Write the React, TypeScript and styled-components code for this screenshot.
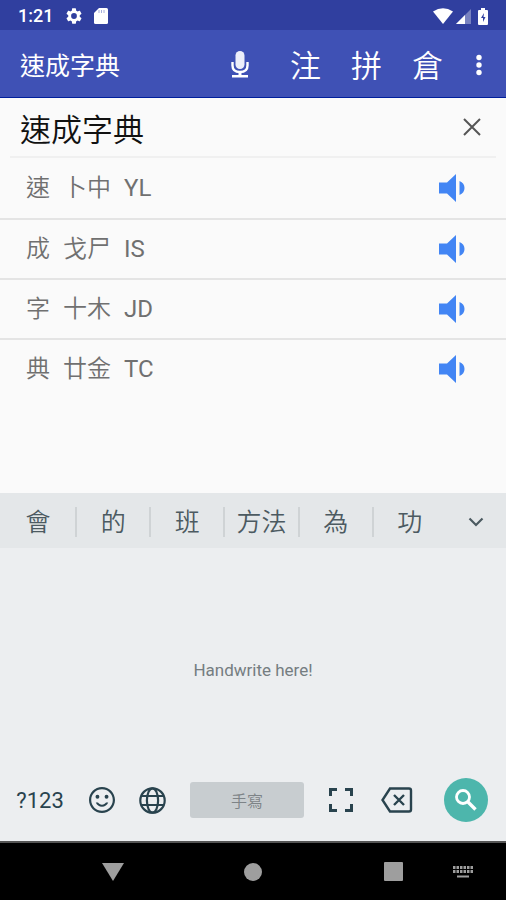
import React, { useState } from 'react';
import styled, { createGlobalStyle } from 'styled-components';

const GlobalStyle = createGlobalStyle`
  *, *::before, *::after { box-sizing: border-box; }
  body { margin: 0; background: #fafafa; }
  body, button, input { font-family: Roboto, "Noto Sans CJK TC", sans-serif; }
`;

const Screen = styled.div`
  display: flex;
  flex-direction: column;
  min-height: 100vh;
  background: #fafafa;
`;

const StatusBar = styled.div`
  display: flex;
  align-items: center;
  height: 30px;
  padding: 2px 14px 0 18px;
  background: #303f9f;
  color: #fff;
`;

const Clock = styled.time`
  width: 48px;
  font-size: 18px;
  font-weight: 500;
  line-height: 24px;
`;

const StatusIcons = styled.div<{ $gap: number; $end?: boolean }>`
  display: flex;
  align-items: center;
  gap: ${p => p.$gap}px;
  margin-left: ${p => (p.$end ? 'auto' : '0')};
`;

const Icon = styled.svg`
  display: block;
  flex: none;
  fill: currentColor;
`;

const AppBar = styled.header`
  display: flex;
  align-items: center;
  height: 68px;
  padding: 2px 6px 0 20px;
  background: #3f51b5;
  border-bottom: 1px solid #001f9c;
  color: #fff;
`;

const Title = styled.h1`
  flex: 1;
  margin: 0;
  padding-top: 4px;
  font-size: 25px;
  font-weight: 400;
  line-height: 36px;
  white-space: nowrap;
`;

const PlainButton = styled.button`
  display: flex;
  align-items: center;
  justify-content: center;
  padding: 0;
  border: 0;
  background: none;
  color: inherit;
  cursor: pointer;
`;

const BarAction = styled(PlainButton)<{ $width: number }>`
  width: ${p => p.$width}px;
  height: 60px;
`;

const BarGlyph = styled(BarAction)`
  padding-top: 4px;
  font-size: 31px;
  font-weight: 350;
  line-height: 40px;
`;

const SearchRow = styled.form`
  display: flex;
  align-items: center;
  height: 60px;
  margin: 0 10px;
  border-bottom: 2px solid #f0f0f0;
`;

const SearchInput = styled.input`
  flex: 1;
  min-width: 0;
  height: 48px;
  padding: 0 10px;
  border: 0;
  outline: 0;
  background: none;
  color: #111;
  font-size: 31px;
  font-weight: 350;
`;

const ClearButton = styled(PlainButton)`
  width: 48px;
  height: 48px;
  color: #555;
`;

const Results = styled.ul`
  flex: 1;
  margin: 0;
  padding: 0;
  list-style: none;
`;

const ResultRow = styled.li`
  display: flex;
  align-items: center;
  gap: 13px;
  height: 60px;
  padding: 0 36px 0 26px;
  color: #707070;
  font-size: 24px;
  line-height: 36px;

  & + & { border-top: 2px solid #e4e4e4; }
`;

const Glyphs = styled.span`
  font-weight: 350;
`;

const Letters = styled.span`
  flex: 1;
`;

const SpeakButton = styled(PlainButton)`
  width: 36px;
  height: 48px;
  color: #4285f4;
`;

const Keyboard = styled.section`
  background: #eceef0;
  color: #37474f;
`;

const Candidates = styled.div`
  display: grid;
  grid-template-columns: repeat(6, 74fr) 60fr;
  align-items: center;
  height: 55px;
  padding: 2px 0 0 1px;
  background: #e4e7e9;
`;

const Candidate = styled(PlainButton)`
  height: 30px;
  padding-top: 2px;
  font-size: 25px;
  font-weight: 350;
  line-height: 30px;
  color: #4c5a61;
  white-space: nowrap;

  & + & { border-left: 2px solid #cfd3d5; }
`;

const MoreButton = styled(PlainButton)`
  height: 48px;
`;

const WritingArea = styled.div`
  display: flex;
  align-items: center;
  justify-content: center;
  height: 211px;
  padding-top: 32px;
  color: #757d81;
  font-size: 17px;
  line-height: 24px;
`;

const KeyRow = styled.div`
  display: grid;
  grid-template-columns: 52fr 72fr 28fr 147fr 56fr 56fr 63px;
  align-items: center;
  height: 82px;
  padding: 0 18px 0 14px;
`;

const Key = styled(PlainButton)`
  height: 48px;
  font-size: 22px;
  color: #29434e;
`;

const SpaceKey = styled(PlainButton)`
  height: 36px;
  margin: 0 9px 0 24px;
  border-radius: 3px;
  background: #c8cdd0;
  color: #7d8387;
  font-size: 16px;
  font-weight: 350;
`;

const SearchKey = styled(PlainButton)`
  justify-self: end;
  width: 44px;
  height: 44px;
  border-radius: 50%;
  background: #4db6ac;
  color: #fff;
`;

const NavBar = styled.nav`
  display: grid;
  grid-template-columns: 43fr 140fr 140fr 30fr 80fr 60fr 13fr;
  align-items: center;
  height: 59px;
  border-top: 2px solid #555;
  background: #000;
  color: #9e9e9e;
`;

const NavButton = styled(PlainButton)<{ $column: number }>`
  grid-column: ${p => p.$column};
  height: 48px;
`;

const entries = [
  { char: '速', radicals: '卜中', code: 'YL' },
  { char: '成', radicals: '戈尸', code: 'IS' },
  { char: '字', radicals: '十木', code: 'JD' },
  { char: '典', radicals: '廿金', code: 'TC' },
];

const candidates = ['會', '的', '班', '方法', '為', '功'];

const gear =
  'M19.14 12.94c.04-.3.06-.61.06-.94 0-.32-.02-.64-.07-.94l2.03-1.58a.49.49 0 0 0 .12-.61l-1.92-3.32a.488.488 0 0 0-.59-.22l-2.39.96c-.5-.38-1.03-.7-1.62-.94l-.36-2.54a.484.484 0 0 0-.48-.41h-3.84c-.24 0-.43.17-.47.41l-.36 2.54c-.59.24-1.13.57-1.62.94l-2.39-.96c-.22-.08-.47 0-.59.22L2.74 8.87c-.12.21-.08.47.12.61l2.03 1.58c-.05.3-.09.63-.09.94s.02.64.07.94l-2.03 1.58a.49.49 0 0 0-.12.61l1.92 3.32c.12.22.37.29.59.22l2.39-.96c.5.38 1.03.7 1.62.94l.36 2.54c.05.24.24.41.48.41h3.84c.24 0 .44-.17.47-.41l.36-2.54c.59-.24 1.13-.56 1.62-.94l2.39.96c.22.08.47 0 .59-.22l1.92-3.32c.12-.22.07-.47-.12-.61l-2.01-1.58zM12 15.6A3.6 3.6 0 1 1 12 8.4a3.6 3.6 0 0 1 0 7.2z';

const smile =
  'M11.99 2C6.47 2 2 6.48 2 12s4.47 10 9.99 10C17.52 22 22 17.52 22 12S17.52 2 11.99 2zM12 20.3c-4.58 0-8.3-3.72-8.3-8.3s3.72-8.3 8.3-8.3 8.3 3.72 8.3 8.3-3.72 8.3-8.3 8.3zm3.5-9.3a1.5 1.5 0 1 0 0-3 1.5 1.5 0 0 0 0 3zm-7 0a1.5 1.5 0 1 0 0-3 1.5 1.5 0 0 0 0 3zm3.5 6.2c2.2 0 4-1.2 4.8-3.2h-1.7c-.6 1-1.8 1.6-3.1 1.6s-2.5-.6-3.1-1.6H7.2c.8 2 2.6 3.2 4.8 3.2z';

const keyCells = [0, 1, 2, 3, 4, 5].flatMap(col => [0, 1].map(row => ({ col, row })));

export default function App() {
  const [query, setQuery] = useState('速成字典');

  return (
    <>
      <GlobalStyle />
      <Screen>
        <StatusBar>
          <Clock>1:21</Clock>
          <StatusIcons $gap={12}>
            <Icon width="16" height="16" viewBox="2 2 20 20"><path d={gear} /></Icon>
            <Icon width="14" height="16" viewBox="0 0 14 16">
              <path d="M5 0h7.5Q14 0 14 1.5v13q0 1.500-1.500 1.500h-11Q0 16 0 14.500V5z" />
              <path d="M5 2v3M7.500 2v3M10 2v3" stroke="#a5addb" />
            </Icon>
          </StatusIcons>
          <StatusIcons $gap={3} $end>
            <Icon width="20" height="16" viewBox="0 0 20 16"><path d="M0 3.500Q10-3 20 3.500L10 16z" /></Icon>
            <Icon width="15" height="15" viewBox="0 0 15 15">
              <path d="M0 15 15 0v15z" opacity=".35" />
              <path d="M0 15 9 6v9z" />
            </Icon>
            <Icon width="18" height="17" viewBox="0 0 18 17">
              <path d="M7 2V0h4v2h2q1 0 1 1v13q0 1-1 1H5q-1 0-1-1V3q0-1 1-1z" />
              <path d="M10 5 7 10h2v4l2.500-5h-2z" fill="#303f9f" />
            </Icon>
          </StatusIcons>
        </StatusBar>

        <AppBar>
          <Title>速成字典</Title>
          <BarAction type="button" $width={70} aria-label="Voice input">
            <Icon width="18" height="30" viewBox="0 0 18 30">
              <path d="M1.500 12v3.500q0 6.500 7.500 6.500t7.500-6.500V12" fill="none" stroke="#fff" strokeWidth="2.400" />
              <rect x="4.500" y="1" width="9" height="18" rx="4.500" fill="#eceefa" />
              <path d="M7.500 22h3v3H17v2.500H1V25h6.500z" />
            </Icon>
          </BarAction>
          <BarGlyph type="button" $width={61}>注</BarGlyph>
          <BarGlyph type="button" $width={61}>拼</BarGlyph>
          <BarGlyph type="button" $width={61}>倉</BarGlyph>
          <BarAction type="button" $width={42} aria-label="More options">
            <Icon width="6" height="22" viewBox="0 0 6 22">
              <circle cx="3" cy="3.500" r="2.700" /><circle cx="3" cy="11" r="2.700" /><circle cx="3" cy="18.500" r="2.700" />
            </Icon>
          </BarAction>
        </AppBar>

        <SearchRow onSubmit={e => e.preventDefault()}>
          <SearchInput aria-label="Search" value={query} onChange={e => setQuery(e.target.value)} />
          <ClearButton type="button" aria-label="Clear" onClick={() => setQuery('')}>
            <Icon width="18" height="18" viewBox="0 0 18 18">
              <path d="m1 1 16 16M17 1 1 17" stroke="currentColor" strokeWidth="2" />
            </Icon>
          </ClearButton>
        </SearchRow>

        <Results>
          {entries.map(entry => (
            <ResultRow key={entry.char}>
              <Glyphs>{entry.char}</Glyphs>
              <Glyphs>{entry.radicals}</Glyphs>
              <Letters>{entry.code}</Letters>
              <SpeakButton type="button" aria-label={`Play ${entry.char}`}>
                <Icon width="26" height="28" viewBox="0 0 26 28">
                  <path d="M0 8.500h8L17 0v28L8 19.500H0zM20.500 7q5 2 5 7t-5 7z" />
                </Icon>
              </SpeakButton>
            </ResultRow>
          ))}
        </Results>

        <Keyboard>
          <Candidates>
            {candidates.map(word => <Candidate type="button" key={word}>{word}</Candidate>)}
            <MoreButton type="button" aria-label="More candidates">
              <Icon width="16" height="10" viewBox="0 0 16 10">
                <path d="m1.500 1.500 6.500 6.500 6.500-6.500" fill="none" stroke="#4c5a61" strokeWidth="2.200" />
              </Icon>
            </MoreButton>
          </Candidates>
          <WritingArea>Handwrite here!</WritingArea>
          <KeyRow>
            <Key type="button">?123</Key>
            <Key type="button" aria-label="Emoji">
              <Icon width="26" height="26" viewBox="2 2 20 20"><path d={smile} /></Icon>
            </Key>
            <Key type="button" aria-label="Language">
              <Icon width="27" height="27" viewBox="0 0 27 27">
                <g fill="none" stroke="currentColor" strokeWidth="2.200">
                  <circle cx="13.500" cy="13.500" r="12.200" />
                  <ellipse cx="13.500" cy="13.500" rx="5.600" ry="12.200" />
                  <path d="M2.500 9h22M2.500 18h22" />
                </g>
              </Icon>
            </Key>
            <SpaceKey type="button">手寫</SpaceKey>
            <Key type="button" aria-label="Full screen">
              <Icon width="24" height="24" viewBox="0 0 24 24">
                <path d="M1.500 8V1.500H8M16 1.500h6.500V8M1.500 16v6.500H8M16 22.500h6.500V16" fill="none" stroke="currentColor" strokeWidth="3" />
              </Icon>
            </Key>
            <Key type="button" aria-label="Delete">
              <Icon width="32" height="26" viewBox="0 0 32 26">
                <path d="M9 1.500h19q2 0 2 2v19q0 2-2 2H9L1.500 13zM13 8l10 10M23 8 13 18" fill="none" stroke="currentColor" strokeWidth="2.400" />
              </Icon>
            </Key>
            <SearchKey type="button" aria-label="Search">
              <Icon width="22" height="22" viewBox="0 0 22 22">
                <circle cx="8" cy="8" r="6.500" fill="none" stroke="currentColor" strokeWidth="2.800" />
                <path d="m12.500 12.500 8 8" stroke="currentColor" strokeWidth="3.400" />
              </Icon>
            </SearchKey>
          </KeyRow>
        </Keyboard>

        <NavBar>
          <NavButton type="button" $column={2} aria-label="Back">
            <Icon width="22" height="18" viewBox="0 0 22 18"><path d="M0 0h22L11 18z" /></Icon>
          </NavButton>
          <NavButton type="button" $column={3} aria-label="Home">
            <Icon width="18" height="18" viewBox="0 0 18 18"><circle cx="9" cy="9" r="9" /></Icon>
          </NavButton>
          <NavButton type="button" $column={5} aria-label="Recent apps">
            <Icon width="19" height="19" viewBox="0 0 19 19"><rect width="19" height="19" rx="1" /></Icon>
          </NavButton>
          <NavButton type="button" $column={6} aria-label="Switch keyboard">
            <Icon width="20" height="12" viewBox="0 0 20 12">
              {keyCells.map(c => (
                <rect key={`${c.col}-${c.row}`} x={c.col * 3.5} y={c.row * 4} width="2.500" height="3" />
              ))}
              <rect x="4" y="9.500" width="12" height="2" />
            </Icon>
          </NavButton>
        </NavBar>
      </Screen>
    </>
  );
}
